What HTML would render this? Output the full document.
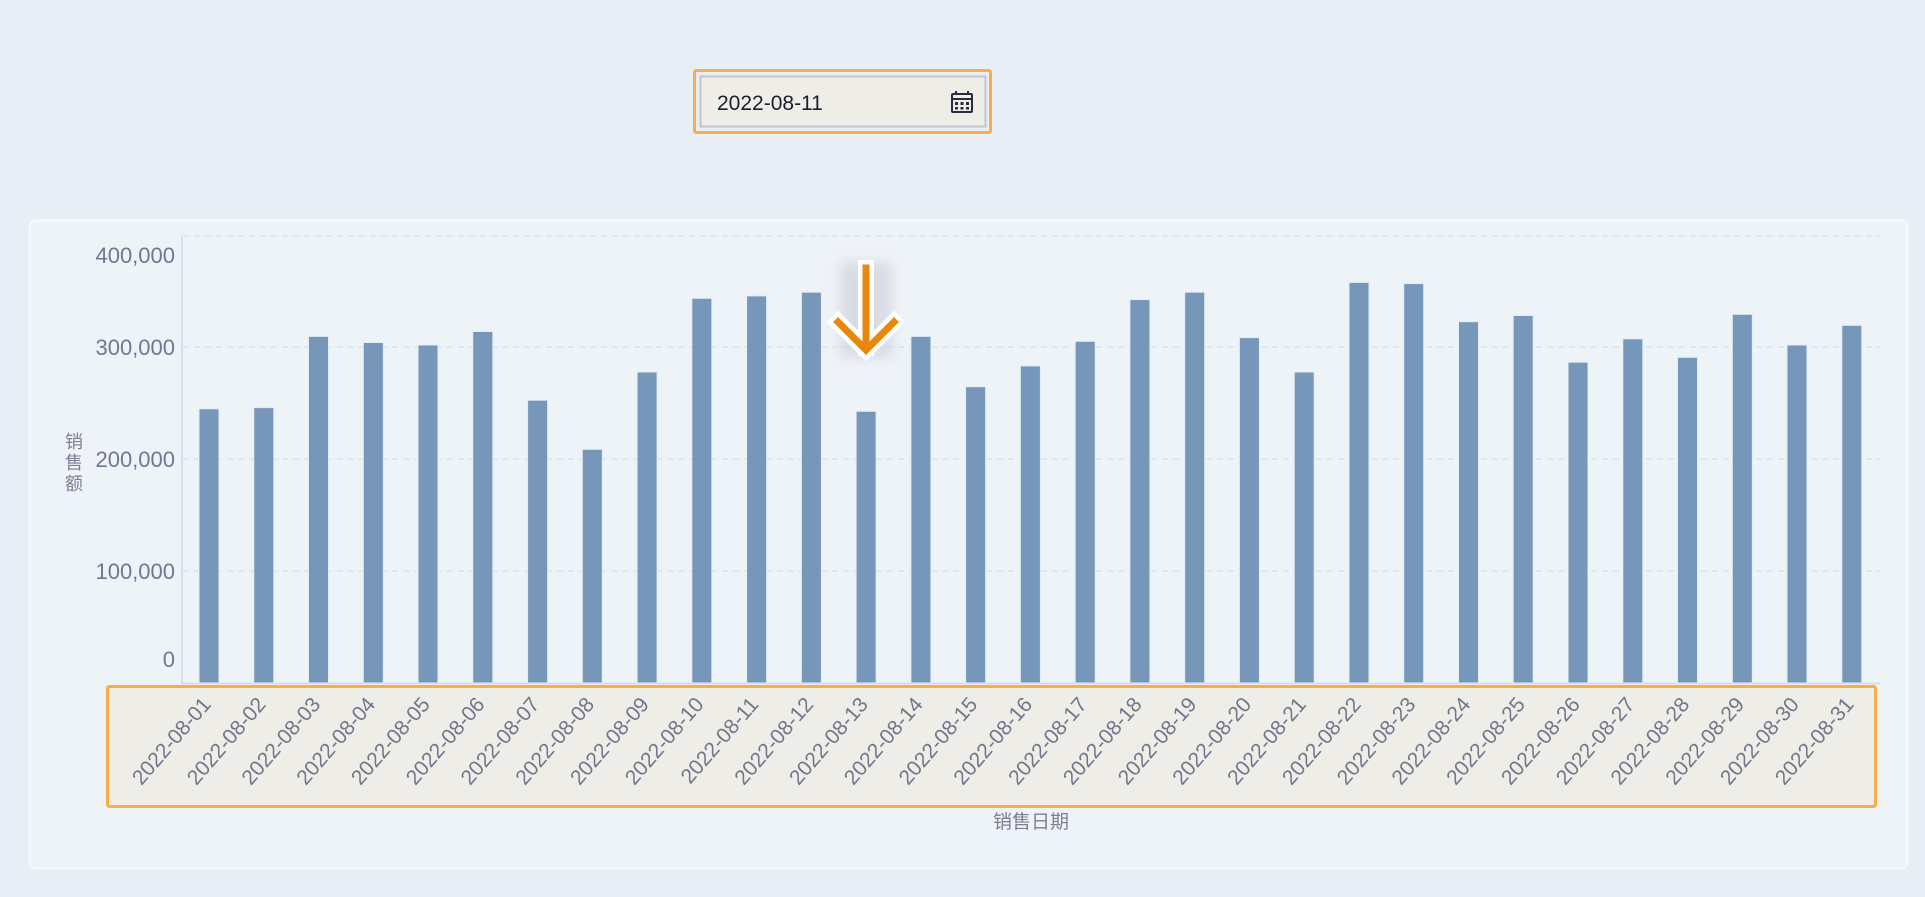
<!DOCTYPE html>
<html><head><meta charset="utf-8"><style>
html,body{margin:0;padding:0;background:#e8eef5;width:1925px;height:897px;overflow:hidden;font-family:"Liberation Sans","Noto Sans CJK SC",sans-serif}
</style></head><body>
<svg width="1925" height="897" xmlns="http://www.w3.org/2000/svg" style="position:absolute;left:0;top:0">
<defs><filter id="sh" x="-50%" y="-50%" width="200%" height="200%"><feGaussianBlur stdDeviation="6"/></filter></defs>
<rect x="694.5" y="70.5" width="296" height="62" rx="2" fill="none" stroke="#f6ae4a" stroke-width="3"/>
<rect x="700.5" y="76.5" width="285" height="50" fill="#efede8" stroke="#c0c6cc" stroke-width="2"/>
<text x="717" y="110" font-size="21" fill="#1e1e30">2022-08-11</text>
<g fill="none" stroke="#2a2a40" stroke-width="2">
<rect x="952" y="94" width="20" height="18" rx="1"/>
<line x1="952" y1="99" x2="972" y2="99"/>
<line x1="956" y1="91" x2="956" y2="95"/><line x1="968" y1="91" x2="968" y2="95"/>
</g>
<g fill="#2a2a40"><rect x="955" y="102" width="3" height="3"/><rect x="960.5" y="102" width="3" height="3"/><rect x="966" y="102" width="3" height="3"/><rect x="955" y="107" width="3" height="2.5"/><rect x="960.5" y="107" width="3" height="2.5"/><rect x="966" y="107" width="3" height="2.5"/></g>
<rect x="29.5" y="220.5" width="1878" height="648" rx="6" fill="#eef3f8" stroke="#f8fafc" stroke-width="2"/>
<g stroke="#dde3ea" stroke-width="1.5" stroke-dasharray="6,5">
<line x1="183" y1="236" x2="1880" y2="236"/><line x1="183" y1="347" x2="1880" y2="347"/><line x1="183" y1="459" x2="1880" y2="459"/><line x1="183" y1="571" x2="1880" y2="571"/>
</g>
<line x1="182" y1="236" x2="182" y2="684" stroke="#d3d9e0" stroke-width="1.5"/>
<line x1="182" y1="683.5" x2="1880" y2="683.5" stroke="#d3d9e0" stroke-width="1.5"/>
<g font-size="22" fill="#737591" text-anchor="end">
<text x="175" y="263">400,000</text><text x="175" y="355">300,000</text><text x="175" y="467">200,000</text><text x="175" y="579">100,000</text><text x="175" y="667">0</text>
</g>
<g font-size="18" fill="#7d7f92" text-anchor="middle"><text x="74" y="448">销</text><text x="74" y="469">售</text><text x="74" y="490">额</text></g>
<g id="bars" fill="#7697ba" stroke="#e4ecf4" stroke-width="1"></g>
<rect x="107.5" y="686.5" width="1768" height="120" rx="2" fill="#efede8" stroke="#f6ae4a" stroke-width="3"/>
<g id="xl" font-size="21" fill="#73758b" text-anchor="end"></g>
<text x="1031" y="828" font-size="19" fill="#7d7f92" text-anchor="middle">销售日期</text>
<rect x="840" y="262" width="52" height="96" fill="#c9ced6" opacity="0.6" filter="url(#sh)"/>
<g fill="none" stroke-linecap="square">
<path d="M866 268 V348 M838 322 L866 350 L894 322" stroke="#fff" stroke-width="16" stroke-linejoin="miter"/>
<path d="M866 268 V346 M838 322 L866 350 L894 322" stroke="#e8870a" stroke-width="7" stroke-linejoin="miter"/>
</g>
</svg>
<script>
var tops=[408.8,407.6,336.4,342.5,345,331.5,400.2,449.3,372,298.3,295.9,292.2,411.3,336.4,386.7,365.9,341.3,299.6,292.2,337.6,372,282.4,283.6,321.7,315.5,362.2,338.8,357.3,314.3,345,325.3];
var b='',l='';
for(var i=0;i<31;i++){var x=199+i*54.76;b+='<rect x="'+x.toFixed(1)+'" y="'+tops[i]+'" width="20" height="'+(683-tops[i]).toFixed(1)+'"/>';
var cx=x+13,d=('0'+(i+1)).slice(-2);
l+='<text transform="translate('+cx.toFixed(1)+',705) rotate(-49)">2022-08-'+d+'</text>';}
document.getElementById('bars').innerHTML=b;document.getElementById('xl').innerHTML=l;
</script>
</body></html>
